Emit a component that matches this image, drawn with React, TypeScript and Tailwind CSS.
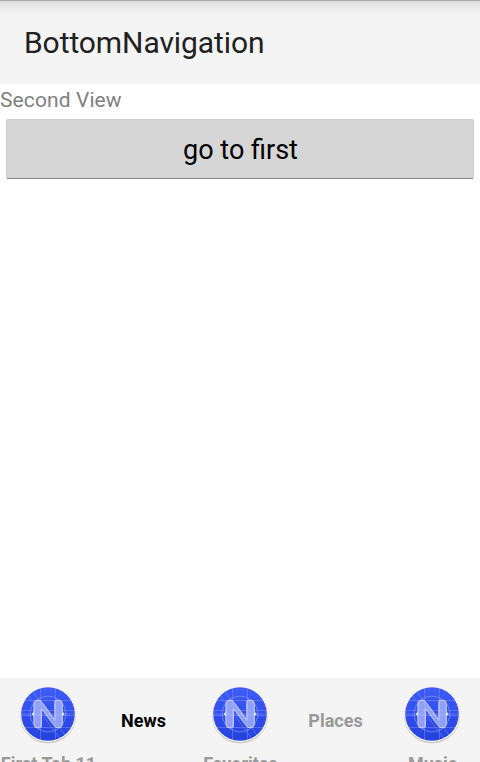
import React from "react";

function NativeIcon({ id }: { id: string }) {
  const n = "M17.9 22Q17.9 18.1 21.8 18.1Q24.4 18.1 26 20.3L38.8 37.6V20.1Q38.8 18.1 40.8 18.1H42.6Q46.3 18.1 46.3 21.8V42Q46.3 45.9 42.4 45.9Q39.8 45.9 38.2 43.7L25.4 26.6V43.9Q25.4 45.9 23.4 45.9H21.6Q17.9 45.9 17.9 42.2Z";
  return (
    <svg className="block h-16 w-16 shrink-0" viewBox="0 0 64 64">
      <defs>
        <linearGradient id={id} x1="0" y1="0" x2="0" y2="1">
          <stop offset="0" stopColor="#3f5df9" />
          <stop offset="1" stopColor="#2741dd" />
        </linearGradient>
        <clipPath id={`${id}-clip`}>
          <circle cx="32" cy="32" r="26.8" />
        </clipPath>
      </defs>
      <circle cx="32" cy="33.4" r="28.3" fill="#000" opacity=".08" />
      <circle cx="32" cy="32.8" r="28" fill="#000" opacity=".14" />
      <circle cx="32" cy="32" r="28" fill="#f5f5fa" />
      <circle cx="32" cy="32" r="26.8" fill={`url(#${id})`} />
      <g clipPath={`url(#${id}-clip)`} stroke="#a9b7ff" strokeWidth=".8" opacity=".42" fill="none">
        <path d="M4 18.5H60M4 28.5H60M4 32H60M4 33.5H60M4 45.5H60" />
        <path d="M24.5 4V60M39.5 4V60" />
        <path d="M6 5L47 61M12 3L55 61" />
      </g>
      <circle cx="32" cy="32" r="17.8" fill="none" stroke="#a9b7ff" strokeWidth=".8" opacity=".6" />
      <path d={n} fill="#b0bbff" fillOpacity=".74" stroke="#ccd4ff" strokeWidth="1" />
      <path d="M17.4 30.5L15.9 32L17.4 33.5ZM46.8 30.5L48.3 32L46.8 33.5Z" fill="#fff" stroke="#fff" strokeWidth=".5" />
    </svg>
  );
}

const tabs = [
  { title: "First Tab 11", icon: true, active: false },
  { title: "News", icon: false, active: true },
  { title: "Favorites", icon: true, active: false },
  { title: "Places", icon: false, active: false },
  { title: "Music", icon: true, active: false },
];

export default function App() {
  return (
    <div className="flex h-[762px] w-[480px] flex-col overflow-hidden bg-white font-['Roboto',sans-serif]">
      <header className="h-[84px] shrink-0 border-t border-[#aaaaaa] bg-[#f4f4f4] bg-linear-to-b from-[#dadada] via-[#e9e9e9] via-[5px] to-[#f4f4f4] to-[14px] pl-6">
        <h1 className="pt-[24px] text-[30px] leading-9 tracking-[-0.08px] text-[#212121]">BottomNavigation</h1>
      </header>
      <main className="flex min-h-0 flex-1 flex-col">
        <p className="h-[35px] pt-1 text-[21px] leading-[25px] tracking-[0.1px] text-[#808080]">Second View</p>
        <button className="mx-[6px] flex h-[60px] items-center justify-center rounded-[2px] border border-[#cdcdcd] border-b-[#858585] bg-[#d6d6d6] pt-[2px] pl-px text-[27px] leading-8 text-black">
          go to first
        </button>
      </main>
      <nav className="grid h-[84px] shrink-0 grid-cols-5 overflow-hidden bg-[#f4f4f4]">
        {tabs.map((tab) => (
          <div
            key={tab.title}
            className={`flex flex-col items-center text-[18px] leading-[21px] font-bold whitespace-nowrap ${tab.icon ? "pt-1" : "pt-8 pr-px"} ${tab.active ? "text-black" : "text-[#999999]"}`}
          >
            {tab.icon && <NativeIcon id={`disc-${tab.title.replaceAll(" ", "-")}`} />}
            <span className={tab.icon ? "pt-[7px] pl-px" : ""}>{tab.title}</span>
          </div>
        ))}
      </nav>
    </div>
  );
}
